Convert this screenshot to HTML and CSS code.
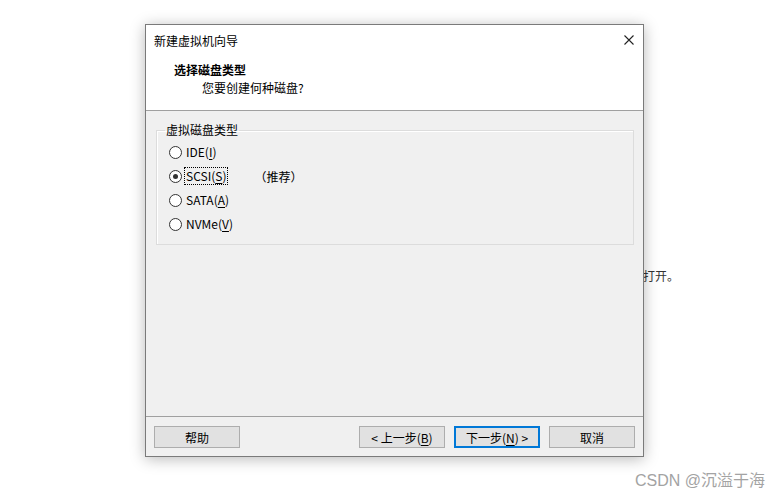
FILE: index.html
```html
<!DOCTYPE html>
<html lang="zh-CN">
<head>
  <meta charset="UTF-8">
  <title>新建虚拟机向导</title>
  <link rel="stylesheet" href="styles.css">
</head>
<body>
  <p class="behind">虚拟机创建完成后将在 VMware Workstation 中打开。</p>

  <div class="dialog">
    <div class="top">
      <div class="titlebar">
        <span class="title">新建虚拟机向导</span>
        <svg class="close" width="10" height="10" viewBox="0 0 10 10">
          <path d="M0.5 0.5 L9.5 9.5 M9.5 0.5 L0.5 9.5" stroke="#222" stroke-width="1.1" fill="none"/>
        </svg>
      </div>
      <div class="header">
        <div class="heading">选择磁盘类型</div>
        <div class="subheading">您要创建何种磁盘?</div>
      </div>
    </div>

    <div class="body">
      <fieldset class="group">
        <legend>虚拟磁盘类型</legend>
        <div class="option"><span class="radio"></span><span class="label">IDE(<u>I</u>)</span></div>
        <div class="option"><span class="radio checked"></span><span class="label focus">SCSI(<u>S</u>)</span><span class="hint">（推荐）</span></div>
        <div class="option"><span class="radio"></span><span class="label">SATA(<u>A</u>)</span></div>
        <div class="option"><span class="radio"></span><span class="label">NVMe(<u>V</u>)</span></div>
      </fieldset>
    </div>

    <div class="footer">
      <button class="btn">帮助</button>
      <div class="spacer"></div>
      <button class="btn">&lt; 上一步(<u>B</u>)</button>
      <button class="btn default">下一步(<u>N</u>) &gt;</button>
      <button class="btn">取消</button>
    </div>
  </div>

  <div class="watermark">CSDN @沉溢于海</div>
</body>
</html>
```

FILE: styles.css
```css
body {
  margin: 0;
  background-color: #fff;
  font-family: "Noto Sans CJK SC", "Noto Sans", sans-serif;
  font-size: 12px;
  color: #000;
}
.behind {
  position: absolute;
  left: 300px;
  top: 268px;
  width: 379px;
  margin: 0;
  text-align: right;
  line-height: 16px;
  color: #333;
  white-space: nowrap;
}
.dialog {
  position: absolute;
  left: 145px;
  top: 24px;
  width: 499px;
  height: 433px;
  box-sizing: border-box;
  border: 1px solid #7a7a7a;
  background-color: #f0f0f0;
  box-shadow: 0 2px 14px rgba(0, 0, 0, 0.28);
  display: flex;
  flex-direction: column;
}
.top {
  background-color: #fff;
  border-bottom: 1px solid #a0a0a0;
}
.titlebar {
  height: 31px;
  display: flex;
  align-items: center;
  justify-content: space-between;
  padding: 0 9px 0 8px;
}
.title {
  line-height: 31px;
}
.close {
  margin-top: -2px;
}
.header {
  height: 54px;
  box-sizing: border-box;
  padding: 6px 0 0 28px;
}
.heading {
  font-weight: bold;
  line-height: 16px;
}
.subheading {
  margin-top: 2px;
  padding-left: 28px;
  line-height: 16px;
}
.body {
  flex: 1;
  padding: 11px 9px 0 10px;
}
.group {
  margin: 0;
  padding: 2px 0 8px 8px;
  border: 1px solid #dcdcdc;
  box-shadow: inset 1px 1px 0 #fff;
}
.group legend {
  padding: 0 1px;
  line-height: 16px;
}
.option {
  height: 24px;
  display: flex;
  align-items: center;
  padding-left: 4px;
}
.radio {
  width: 13px;
  height: 13px;
  box-sizing: border-box;
  border: 1px solid #333;
  border-radius: 50%;
  background-color: #fff;
  display: flex;
  align-items: center;
  justify-content: center;
}
.radio.checked::after {
  content: "";
  width: 5px;
  height: 5px;
  border-radius: 50%;
  background-color: #333;
}
.label {
  margin-left: 2px;
  padding: 0 1px;
  line-height: 16px;
  border: 1px solid transparent;
}
.label.focus {
  border: 1px dotted #000;
}
.hint {
  margin-left: 26px;
}
u {
  text-underline-offset: 2px;
}
.footer {
  border-top: 1px solid #a0a0a0;
  display: flex;
  gap: 9px;
  padding: 9px 8px 8px 8px;
}
.spacer {
  flex: 1;
}
.btn {
  width: 86px;
  height: 22px;
  padding: 0;
  border: 1px solid #adadad;
  background-color: #e1e1e1;
  font-family: inherit;
  font-size: 12px;
  color: #000;
}
.btn.default {
  border-color: #0078d7;
  box-shadow: inset 0 0 0 1px #0078d7;
}
.watermark {
  position: absolute;
  right: 16px;
  top: 467px;
  font-family: "Liberation Sans", "Noto Sans CJK SC", sans-serif;
  font-size: 16px;
  color: #a3a3a3;
}
```
